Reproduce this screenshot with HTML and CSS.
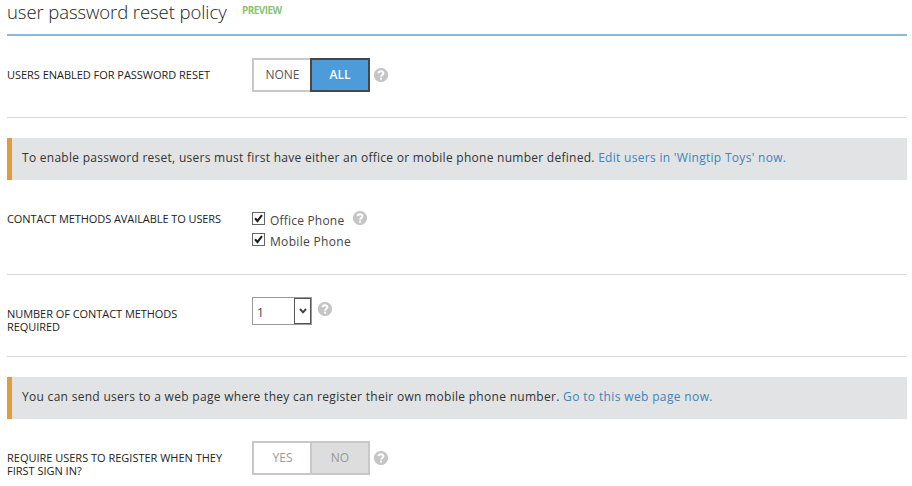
FILE: index.html
```html
<!DOCTYPE html>
<html lang="en">
<head>
<meta charset="utf-8">
<title>User password reset policy</title>
<link rel="stylesheet" href="styles.css">
</head>
<body>
<svg class="symbols" width="0" height="0" aria-hidden="true">
  <symbol id="help" viewBox="0 0 14 14">
    <circle cx="7" cy="7" r="7.1" fill="#c5c5c5"/>
    <path d="M4.5 5.3C4.5 2.5 9.5 2.5 9.5 5.2C9.5 6.8 7.1 6.7 7.1 8.8" fill="none" stroke="#fff" stroke-width="1.9"/>
    <rect x="6.1" y="9.7" width="2" height="1.9" fill="#fff"/>
  </symbol>
  <symbol id="tick" viewBox="0 0 9 9">
    <path d="M1 4.2L3.5 7L8 1.2" fill="none" stroke="#222" stroke-width="2.1"/>
  </symbol>
</svg>
<main class="policy">
  <header class="heading">
    <h1 class="title">user password reset policy</h1>
    <span class="preview">PREVIEW</span>
  </header>

  <section class="row row-enabled">
    <div class="label"><span>USERS ENABLED FOR PASSWORD RESET</span></div>
    <div class="control">
      <div class="toggle"><span class="option">NONE</span><span class="option selected">ALL</span></div>
      <svg class="help"><use href="#help"/></svg>
    </div>
  </section>

  <p class="notice">To enable password reset, users must first have either an office or mobile phone number defined. <a>Edit users in 'Wingtip Toys' now.</a></p>

  <section class="row row-methods">
    <div class="label"><span>CONTACT METHODS AVAILABLE TO USERS</span></div>
    <div class="checks">
      <div class="check"><span class="box"><svg class="tick"><use href="#tick"/></svg></span><span class="name">Office Phone</span><svg class="help"><use href="#help"/></svg></div>
      <div class="check"><span class="box"><svg class="tick"><use href="#tick"/></svg></span><span class="name name-mobile">Mobile Phone</span></div>
    </div>
  </section>

  <section class="row row-number">
    <div class="label"><span>NUMBER OF CONTACT METHODS</span><span>REQUIRED</span></div>
    <div class="control">
      <div class="select"><span class="value">1</span><span class="arrow"><svg class="chevron" viewBox="0 0 8 6"><path d="M1 1L4 4.3L7 1" fill="none" stroke="#444" stroke-width="2"/></svg></span></div>
      <svg class="help"><use href="#help"/></svg>
    </div>
  </section>

  <p class="notice notice-web">You can send users to a web page where they can register their own mobile phone number. <a>Go to this web page now.</a></p>

  <section class="row row-register">
    <div class="label"><span>REQUIRE USERS TO REGISTER WHEN THEY</span><span>FIRST SIGN IN?</span></div>
    <div class="control">
      <div class="toggle disabled"><span class="option">YES</span><span class="option selected">NO</span></div>
      <svg class="help"><use href="#help"/></svg>
    </div>
  </section>
</main>
</body>
</html>
```
FILE: styles.css
```css
* { box-sizing: border-box; }
html { overflow: hidden; }
body { margin: 0; background: #fff; color: #333; font-family: "Open Sans", "Noto Sans", sans-serif; font-size: 12px; }
.symbols { display: none; }
.policy { width: 900px; margin-left: 7px; }
.heading { display: flex; height: 36px; border-bottom: 2px solid #8ab7da; white-space: nowrap; }
.title { width: 235px; margin: 0; font-size: 18.5px; font-weight: 300; line-height: 24px; letter-spacing: -0.08px; color: #222; }
.preview { padding-top: 3px; font-size: 10px; font-weight: 700; line-height: 15px; letter-spacing: -0.55px; color: #8cc475; }
.row { display: flex; border-bottom: 1px solid #d9d9d9; }
.label { flex: 0 0 245px; font-size: 11px; line-height: 13px; letter-spacing: -0.03px; color: #222; white-space: nowrap; }
.label span { display: block; }
.control { display: flex; align-items: flex-start; }
.help { display: block; flex: none; width: 14px; height: 14px; }
.row-enabled { height: 82px; padding-top: 22px; }
.row-enabled .label { padding-top: 10px; }
.row-methods { height: 95px; padding-top: 30px; }
.row-methods .label { padding-top: 2px; letter-spacing: -0.08px; }
.row-number { height: 82px; padding-top: 22px; }
.row-number .label { padding-top: 10px; letter-spacing: -0.05px; }
.row-register { height: 67px; padding-top: 22px; border-bottom: 0; }
.row-register .label { padding-top: 10px; letter-spacing: -0.01px; }
.toggle { display: grid; grid-template-columns: 58px 60px; width: 118px; height: 34px; line-height: 30px; font-size: 12px; color: #555; }
.option { text-align: center; border: 2px solid #c8c8c8; border-right: 0; padding-left: 1px; }
.option.selected { border: 2px solid #464646; padding: 0; background: #4d9bd8; color: #fff; font-weight: 600; }
.toggle.disabled { color: #999; }
.disabled .option.selected { border-color: #c8c8c8; background: #ddd; color: #999; font-weight: 400; }
.toggle + .help { margin: 10px 0 0 4px; }
.notice { height: 42px; margin: 20px 0 0; padding-left: 10px; border-left: 5px solid #e49b3b; background: #e1e3e4; line-height: 40px; letter-spacing: 0.27px; white-space: nowrap; }
.notice-web { letter-spacing: 0.295px; }
.notice a { color: #3d85bb; letter-spacing: 0.3px; }
.notice-web a { letter-spacing: 0.36px; }
.check { display: flex; height: 21px; }
.box { width: 13px; height: 13px; margin: 2px 5px 0 0; border: 1px solid #666; padding: 1px; }
.tick { display: block; width: 9px; height: 9px; }
.name { padding-top: 2px; line-height: 17px; letter-spacing: 0.2px; color: #444; white-space: nowrap; }
.name-mobile { letter-spacing: 0.32px; }
.check .help { margin: 1px 0 0 9px; }
.select { display: flex; width: 60px; height: 28px; border: 1px solid #999; }
.value { flex: 1; padding-left: 4px; line-height: 29px; color: #444; }
.arrow { display: flex; align-items: center; justify-content: center; width: 17px; border: 1px solid #555; }
.chevron { width: 8px; height: 6px; }
.select + .help { margin: 5px 0 0 6px; }
```
